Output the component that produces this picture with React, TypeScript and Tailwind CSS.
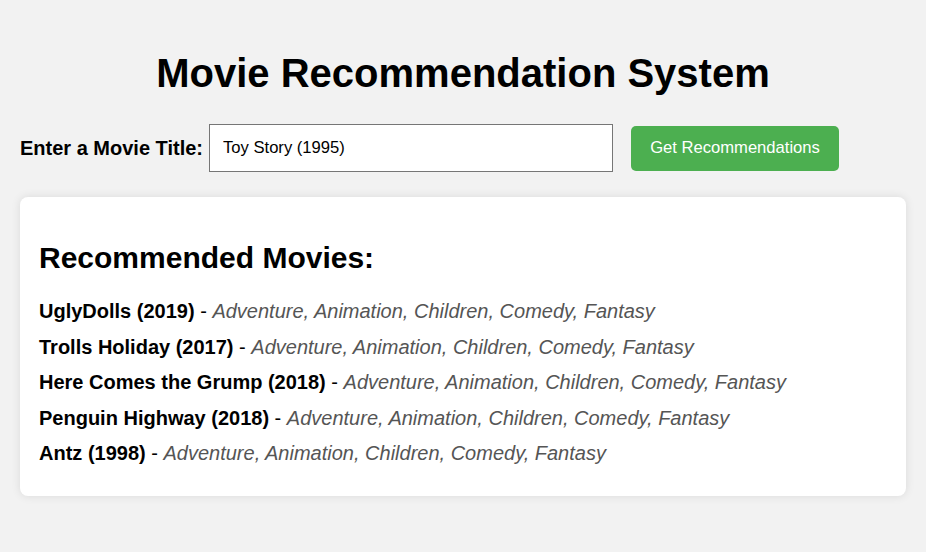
import React from 'react';

const movies = [
  { title: 'UglyDolls (2019)', genres: 'Adventure, Animation, Children, Comedy, Fantasy' },
  { title: 'Trolls Holiday (2017)', genres: 'Adventure, Animation, Children, Comedy, Fantasy' },
  { title: 'Here Comes the Grump (2018)', genres: 'Adventure, Animation, Children, Comedy, Fantasy' },
  { title: 'Penguin Highway (2018)', genres: 'Adventure, Animation, Children, Comedy, Fantasy' },
  { title: 'Antz (1998)', genres: 'Adventure, Animation, Children, Comedy, Fantasy' },
];

const App = () => {
  return (
    <div className="min-h-[552px] bg-[#f2f2f2] px-5 pt-[50px] pb-5 font-['Liberation_Sans',Arial,sans-serif] text-black">
      <h1 className="text-center text-[40px] font-bold leading-[46px]">Movie Recommendation System</h1>

      <div className="mt-[28px] flex h-[48px] items-center">
        <label className="mr-[6px] text-[20px] font-bold leading-[23px]">Enter a Movie Title:</label>
        <input
          type="text"
          defaultValue="Toy Story (1995)"
          className="h-[48px] w-[404px] border border-[#767676] bg-white px-[13px] text-[16.6px] text-black outline-none"
        />
        <button className="ml-[18px] h-[45px] w-[208px] rounded-[5px] bg-[#4caf50] text-[16.6px] text-white">
          Get Recommendations
        </button>
      </div>

      <div className="mt-[25px] rounded-[8px] bg-white px-[19px] pt-5 pb-[24px] shadow-[0_0_10px_rgba(0,0,0,0.1)]">
        <h2 className="mt-[24px] mb-[18.5px] text-[30px] font-bold leading-[34.5px]">Recommended Movies:</h2>
        <div>
          {movies.map((movie, index) => (
            <div key={index} className="py-[6.25px] text-[20px] leading-[23px]">
              <span className="font-bold">{movie.title}</span> -{' '}
              <span className="italic text-[#555]">{movie.genres}</span>
            </div>
          ))}
        </div>
      </div>
    </div>
  );
};

export default App;
